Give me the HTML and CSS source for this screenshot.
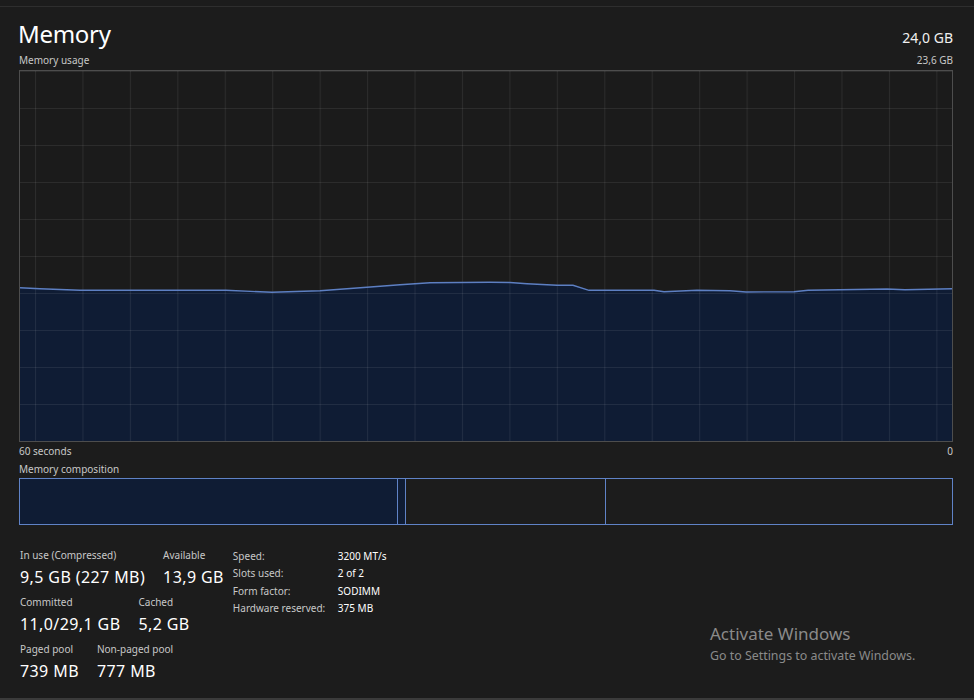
FILE: index.html
```html
<!DOCTYPE html>
<html lang="en">
<head>
<meta charset="utf-8">
<title>Memory</title>
<link rel="stylesheet" href="styles.css">
</head>
<body>
<div class="app">
  <div class="topline"></div>
  <main class="panel">
    <header class="title-row">
      <h1 class="title">Memory</h1>
      <span class="total">24,0 GB</span>
    </header>
    <div class="axis-row top-axis">
      <span>Memory usage</span>
      <span>23,6 GB</span>
    </div>
    <div class="graph">
      <svg class="graph-svg" viewBox="0 0 932 370" width="932" height="370" preserveAspectRatio="none">
        <defs>
          <pattern id="vgrid" patternUnits="userSpaceOnUse" x="15" y="0" width="47.44" height="370">
            <rect x="0" y="0" width="1" height="370" fill="#ffffff" fill-opacity="0.075"/>
          </pattern>
          <pattern id="hgrid" patternUnits="userSpaceOnUse" x="0" y="37" width="932" height="37">
            <rect x="0" y="0" width="932" height="1" fill="#ffffff" fill-opacity="0.075"/>
          </pattern>
        </defs>
        <path class="area" d="M0 216.7 L20 217.7 L60 219.3 L206 219.3 L252 221.3 L300 219.7 L347 216.3 L380 213.7 L410 211.7 L470 211.3 L490 211.5 L507 212.7 L537 214.3 L553 214.3 L569 219.3 L634 219.3 L644 220.7 L677 219.3 L710 219.7 L726 221 L774 220.7 L788 219.3 L867 218 L885 218.7 L932 217.7 L932 370 L0 370 Z"/>
        <rect x="0" y="0" width="932" height="370" fill="url(#vgrid)"/>
        <rect x="0" y="0" width="932" height="340" fill="url(#hgrid)"/>
        <path class="line" d="M0 216.7 L20 217.7 L60 219.3 L206 219.3 L252 221.3 L300 219.7 L347 216.3 L380 213.7 L410 211.7 L470 211.3 L490 211.5 L507 212.7 L537 214.3 L553 214.3 L569 219.3 L634 219.3 L644 220.7 L677 219.3 L710 219.7 L726 221 L774 220.7 L788 219.3 L867 218 L885 218.7 L932 217.7"/>
      </svg>
    </div>
    <div class="axis-row bottom-axis">
      <span>60 seconds</span>
      <span>0</span>
    </div>
    <div class="axis-row comp-label">
      <span>Memory composition</span>
    </div>
    <div class="composition">
      <div class="seg seg-inuse"></div>
      <div class="seg seg-modified"></div>
      <div class="seg seg-standby"></div>
      <div class="seg seg-free"></div>
    </div>

    <section class="details">
      <div class="stats">
        <div class="stat-row">
          <div class="stat"><div class="label">In use (Compressed)</div><div class="value">9,5 GB (227 MB)</div></div>
          <div class="stat"><div class="label">Available</div><div class="value">13,9 GB</div></div>
        </div>
        <div class="stat-row">
          <div class="stat"><div class="label">Committed</div><div class="value">11,0/29,1 GB</div></div>
          <div class="stat"><div class="label">Cached</div><div class="value">5,2 GB</div></div>
        </div>
        <div class="stat-row">
          <div class="stat"><div class="label">Paged pool</div><div class="value">739 MB</div></div>
          <div class="stat"><div class="label">Non-paged pool</div><div class="value">777 MB</div></div>
        </div>
      </div>
      <dl class="props">
        <dt>Speed:</dt><dd>3200 MT/s</dd>
        <dt>Slots used:</dt><dd>2 of 2</dd>
        <dt>Form factor:</dt><dd>SODIMM</dd>
        <dt>Hardware reserved:</dt><dd>375 MB</dd>
      </dl>
    </section>
  </main>
  <div class="watermark">
    <div class="wm-title">Activate Windows</div>
    <div class="wm-sub">Go to Settings to activate Windows.</div>
  </div>
</div>
</body>
</html>
```

FILE: styles.css
```css
* { box-sizing: border-box; }

html, body {
  margin: 0;
  padding: 0;
  background: #1c1c1c;
}

body {
  font-family: "Noto Sans", "Open Sans", sans-serif;
  color: #ffffff;
  width: 974px;
  height: 700px;
  overflow: hidden;
}

.app {
  position: relative;
  height: 700px;
  display: flex;
  flex-direction: column;
  border-bottom: 2px solid #3b3b3b;
}

.topline {
  height: 7px;
  border-bottom: 1px solid #2e2e2e;
}

.panel {
  flex: 1;
  padding: 12px 21px 0 19px;
  display: flex;
  flex-direction: column;
}

.title-row {
  display: flex;
  justify-content: space-between;
  align-items: baseline;
  height: 30px;
}

.title {
  margin: 0;
  font-weight: 400;
  font-size: 24px;
  line-height: 30px;
  margin-left: -1px;
  letter-spacing: -0.3px;
}

.total {
  font-size: 14px;
  line-height: 30px;
  color: #f0f0f0;
}

.axis-row {
  display: flex;
  justify-content: space-between;
  font-size: 10px;
  line-height: 13px;
  color: #c8c8c8;
}

.top-axis { margin-top: 5px; margin-bottom: 3px; }
.bottom-axis { margin-top: 3px; }
.comp-label { margin-top: 5px; margin-bottom: 2px; }

.graph {
  width: 934px;
  height: 372px;
  border: 1px solid #4d4d4d;
  background: #1b1b1b;
}

.graph-svg {
  display: block;
  width: 932px;
  height: 370px;
}

.area { fill: #0f1c34; }
.line { fill: none; stroke: #5d7fc2; stroke-width: 1.4; }

.composition {
  width: 934px;
  height: 47px;
  border: 1px solid #5f82c6;
  display: flex;
}

.seg { height: 100%; }
.seg-inuse { width: 377px; background: #0f1c34; }
.seg-modified { width: 8px; background: #0f1c34; border-left: 1px solid #5f82c6; }
.seg-standby { width: 200px; border-left: 1px solid #5f82c6; }
.seg-free { flex: 1; border-left: 1px solid #5f82c6; }

.details {
  display: flex;
  margin-top: 23px;
  gap: 9px;
}

.stats {
  display: flex;
  flex-direction: column;
  gap: 6px;
  padding-left: 1px;
}

.stat-row {
  display: flex;
  gap: 18px;
}

.label {
  font-size: 10px;
  line-height: 14px;
  color: #c8c8c8;
}

.value {
  font-size: 16px;
  line-height: 24px;
  letter-spacing: 0.4px;
  color: #ffffff;
  margin-top: 3px;
}

.props {
  margin: 0;
  display: grid;
  grid-template-columns: 105px auto;
  grid-auto-rows: 17.3px;
  font-size: 10px;
  line-height: 17.3px;
}

.props dt { color: #c8c8c8; }
.props dd { margin: 0; color: #ffffff; }

.watermark {
  position: absolute;
  left: 710px;
  top: 622px;
  color: #8a8a8a;
}

.wm-title {
  font-size: 17px;
  line-height: 23px;
}

.wm-sub {
  font-size: 12.4px;
  line-height: 18px;
  margin-top: 2px;
}
```
